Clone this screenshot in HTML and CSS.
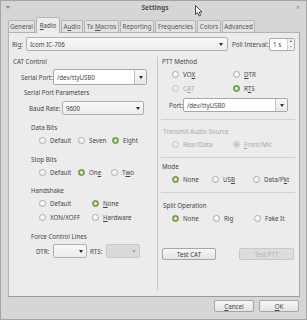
FILE: index.html
```html
<!DOCTYPE html>
<html lang="en">
<head>
    <meta charset="UTF-8">
    <meta name="viewport" content="width=device-width, initial-scale=1.0">
    <title>Settings</title>
    <link rel="stylesheet" href="styles.css">
</head>
<body>
    <div class="window">
        <div class="titlebar">
            <span class="menu-arrow"></span>
            <span class="title">Settings</span>
            <span class="close">×</span>
        </div>
        <svg class="cursor" width="8" height="12" viewBox="0 0 8 12">
            <path d="M0.5 0.5 L0.5 9.5 L2.6 7.6 L4.1 11 L5.6 10.3 L4.2 7 L7 7 Z" fill="#fff" stroke="#222" stroke-width="0.8" stroke-linejoin="round"/>
        </svg>

        <div class="tabs">
            <div class="tab tab-general">General</div>
            <div class="tab tab-radio active"><u>R</u>adio</div>
            <div class="tab tab-audio">A<u>u</u>dio</div>
            <div class="tab tab-tx">Tx <u>M</u>acros</div>
            <div class="tab tab-reporting">Reporting</div>
            <div class="tab tab-freq">Frequencies</div>
            <div class="tab tab-colors">Colors</div>
            <div class="tab tab-advanced">Advanced</div>
        </div>

        <div class="panel">
            <div class="rig-row">
                <span class="rig-label">Ri<u>g</u>:</span>
                <div class="combo rig-combo"><span class="value">Icom IC-706</span><i class="arrow"></i></div>
                <span class="poll-label">Poll Interval:</span>
                <div class="spin">
                    <span class="value">1 s</span>
                    <span class="spin-btns"><i class="up"></i><i class="down"></i></span>
                </div>
            </div>

            <div class="columns">
                <div class="col-left">
                    <div class="heading cat-heading">CAT Control</div>
                    <div class="field-row serial-row">
                        <span class="serial-label">Serial Port:</span>
                        <div class="combo editable serial-combo">
                            <span class="value">/dev/ttyUSB0</span>
                            <span class="drop"><i class="arrow"></i></span>
                        </div>
                    </div>

                    <div class="heading params-heading">Serial Port Parameters</div>
                    <div class="field-row baud-row">
                        <span class="baud-label">Baud Rate:</span>
                        <div class="combo baud-combo"><span class="value">9600</span><i class="arrow"></i></div>
                    </div>

                    <div class="heading sub-heading data-heading">Data Bits</div>
                    <div class="radio-row data-bits">
                        <label class="radio"><i></i>Default</label>
                        <label class="radio"><i></i>Seven</label>
                        <label class="radio checked"><i></i>Eight</label>
                    </div>

                    <div class="heading sub-heading stop-heading">Stop Bits</div>
                    <div class="radio-row stop-bits">
                        <label class="radio"><i></i>Default</label>
                        <label class="radio checked"><i></i>On<u>e</u></label>
                        <label class="radio"><i></i>T<u>w</u>o</label>
                    </div>

                    <div class="heading sub-heading hand-heading">Handshake</div>
                    <div class="radio-row handshake">
                        <label class="radio"><i></i>Default</label>
                        <label class="radio checked"><i></i><u>N</u>one</label>
                    </div>
                    <div class="radio-row handshake second">
                        <label class="radio"><i></i>XON/XOFF</label>
                        <label class="radio"><i></i><u>H</u>ardware</label>
                    </div>

                    <div class="heading sub-heading force-heading">Force Control Lines</div>
                    <div class="field-row lines-row">
                        <span class="dtr-label">DTR:</span>
                        <div class="combo small-combo"><span class="value"></span><i class="arrow"></i></div>
                        <span class="rts-label">RTS:</span>
                        <div class="combo small-combo disabled"><span class="value"></span><i class="arrow"></i></div>
                    </div>
                </div>

                <div class="col-right">
                    <div class="heading ptt-heading">PTT Method</div>
                    <div class="radio-row ptt first">
                        <label class="radio"><i></i>VO<u>X</u></label>
                        <label class="radio"><i></i><u>D</u>TR</label>
                    </div>
                    <div class="radio-row ptt second">
                        <label class="radio disabled"><i></i>C<u>A</u>T</label>
                        <label class="radio checked"><i></i>R<u>T</u>S</label>
                    </div>
                    <div class="field-row port-row">
                        <span class="port-label">Port:</span>
                        <div class="combo editable port-combo">
                            <span class="value">/dev/ttyUSB0</span>
                            <span class="drop"><i class="arrow"></i></span>
                        </div>
                    </div>

                    <div class="separator sep-audio"></div>
                    <div class="heading disabled audio-heading">Transmit Audio Source</div>
                    <div class="radio-row ptt audio">
                        <label class="radio disabled"><i></i>Rear/Data</label>
                        <label class="radio disabled checked"><i></i><u>F</u>ront/Mic</label>
                    </div>

                    <div class="separator sep-mode"></div>
                    <div class="heading mode-heading">Mode</div>
                    <div class="radio-row mode">
                        <label class="radio checked"><i></i>None</label>
                        <label class="radio"><i></i>US<u>B</u></label>
                        <label class="radio"><i></i>Data/P<u>k</u>t</label>
                    </div>

                    <div class="separator sep-split"></div>
                    <div class="heading split-heading">Split Operation</div>
                    <div class="radio-row split">
                        <label class="radio checked"><i></i>None</label>
                        <label class="radio"><i></i>Rig</label>
                        <label class="radio"><i></i>Fake It</label>
                    </div>

                    <div class="test-row">
                        <button class="test-cat">Test CAT</button>
                        <button class="test-ptt" disabled>Test PTT</button>
                    </div>
                </div>
            </div>
        </div>

        <div class="footer">
            <button><u>C</u>ancel</button>
            <button><u>O</u>K</button>
        </div>
    </div>
</body>
</html>
```

FILE: styles.css
```css
* {
    box-sizing: border-box;
}
body {
    margin: 0;
    background: #d6d6d6;
    font-family: "Noto Sans", "DejaVu Sans", sans-serif;
    font-size: 6.2px;
    color: #454545;
}
u {
    text-decoration-thickness: 0.5px;
    text-underline-offset: 1px;
}
.window {
    position: relative;
    width: 307px;
    height: 320px;
    border: 1px solid #a4a4a4;
    background: #d6d6d6;
}

/* title bar */
.titlebar {
    display: flex;
    justify-content: space-between;
    align-items: flex-start;
    height: 17px;
    line-height: 13px;
    padding: 0 6px 0 5px;
}
.menu-arrow {
    width: 0;
    height: 0;
    margin-top: 5px;
    border-left: 2px solid transparent;
    border-right: 2px solid transparent;
    border-top: 3px solid #8a8a8a;
}
.title {
    font-weight: bold;
    font-size: 6.6px;
    color: #4e4e4e;
    margin-left: 4px;
}
.close {
    color: #8a8a8a;
    font-size: 7px;
}
.cursor {
    position: absolute;
    left: 194px;
    top: 4px;
}

/* tabs */
.tabs {
    display: flex;
    align-items: flex-end;
    gap: 1px;
    height: 14px;
    margin-left: 7px;
}
.tab {
    position: relative;
    height: 12px;
    line-height: 11px;
    text-align: center;
    background: #e2e2e2;
    border: 1px solid #b6b6b6;
    border-bottom: none;
    border-radius: 2px 2px 0 0;
    color: #555;
}
.tab.active {
    height: 16px;
    line-height: 15px;
    margin-bottom: -1px;
    background: #ececec;
    color: #454545;
    z-index: 1;
}
.tab-general { width: 27px; }
.tab-radio { width: 24px; }
.tab-audio { width: 22px; }
.tab-tx { width: 35px; }
.tab-reporting { width: 34px; }
.tab-freq { width: 41px; }
.tab-colors { width: 24px; }
.tab-advanced { width: 33px; }

/* main panel */
.panel {
    width: 292px;
    height: 265px;
    margin-left: 7px;
    background: #ececec;
    border: 1px solid #b3b3b3;
    border-bottom-color: #9c9c9c;
    border-right-color: #a8a8a8;
}
.rig-row {
    display: flex;
    align-items: center;
    height: 14px;
    margin-top: 4px;
    padding-left: 3px;
}
.rig-label { width: 14px; }
.poll-label {
    width: 37px;
    margin-left: 4px;
}

/* combo boxes */
.combo {
    display: flex;
    align-items: center;
    height: 14px;
    padding: 0 3px;
    border: 1px solid #b0b0b0;
    border-radius: 2px;
    background: linear-gradient(#f8f8f8, #ededed);
}
.combo .value {
    flex: 1;
    white-space: nowrap;
}
.arrow {
    width: 0;
    height: 0;
    border-left: 2px solid transparent;
    border-right: 2px solid transparent;
    border-top: 3px solid #2e2e2e;
}
.rig-combo .arrow {
    margin-right: 1px;
}
.combo.editable {
    padding: 0 0 0 3px;
    background: #fff;
    border-color: #a8a8a8;
}
.drop {
    display: flex;
    align-items: center;
    justify-content: center;
    width: 12px;
    height: 100%;
    border-left: 1px solid #c2c2c2;
    background: linear-gradient(#f8f8f8, #e8e8e8);
}
.combo.disabled {
    background: #dadada;
    border-color: #c8c8c8;
}
.combo.disabled .arrow {
    border-top-color: #a8a8a8;
}
.rig-combo { width: 202px; }
.serial-combo { width: 94px; height: 16px; }
.baud-combo { width: 82px; }
.port-combo { width: 105px; }
.small-combo { width: 34px; }

/* spin box */
.spin {
    display: flex;
    width: 26px;
    height: 13px;
    border: 1px solid #aaa;
    border-radius: 2px;
    background: #fff;
}
.spin .value {
    flex: 1;
    line-height: 11px;
    padding-left: 3px;
}
.spin-btns {
    display: flex;
    flex-direction: column;
    justify-content: space-around;
    align-items: center;
    width: 7px;
    border-left: 1px solid #d0d0d0;
    background: #f2f2f2;
}
.spin-btns i {
    width: 0;
    height: 0;
    border-left: 1.5px solid transparent;
    border-right: 1.5px solid transparent;
}
.spin-btns .up { border-bottom: 2px solid #555; }
.spin-btns .down { border-top: 2px solid #b0b0b0; }

/* two columns */
.columns {
    display: flex;
    height: 233px;
    margin-top: 6px;
}
.col-left {
    width: 149px;
    border-right: 1px solid #c6c6c6;
}
.col-right {
    flex: 1;
}
.heading {
    height: 12px;
    line-height: 12px;
    white-space: nowrap;
}
.heading.disabled {
    color: #a8a8a8;
}
.field-row {
    display: flex;
    align-items: center;
}

/* left column */
.cat-heading {
    height: 10px;
    line-height: 10px;
    padding-left: 4px;
}
.serial-row {
    margin-top: 2px;
    padding-left: 12px;
}
.serial-label { width: 32px; }
.params-heading {
    margin-top: 2px;
    padding-left: 15px;
}
.baud-row {
    margin-top: 2px;
    padding-left: 20px;
}
.baud-label { width: 33px; }
.sub-heading { padding-left: 22px; }
.data-heading { margin-top: 7px; }
.stop-heading { margin-top: 8px; }
.hand-heading { margin-top: 7px; }
.force-heading { margin-top: 8px; }
.lines-row {
    margin-top: 1px;
    padding-left: 27px;
}
.dtr-label { width: 17px; }
.rts-label {
    width: 16px;
    margin-left: 3px;
}

/* radio buttons */
.radio-row {
    display: grid;
    align-items: center;
    height: 12px;
    padding-left: 30px;
}
.radio {
    display: flex;
    align-items: center;
    white-space: nowrap;
}
.radio i {
    width: 7px;
    height: 7px;
    margin-right: 4px;
    border: 1px solid #a9a9a9;
    border-radius: 50%;
    background: linear-gradient(#fff, #f0f0f0);
}
.radio.checked i {
    border-color: #5d8a35;
    background: radial-gradient(circle, #eef5e4 0 1.1px, #86b356 1.6px);
}
.radio.disabled {
    color: #a8a8a8;
}
.radio.disabled i {
    border-color: #c6c6c6;
    background: #ebebeb;
}
.radio.disabled.checked i {
    border-color: #c0c0c0;
    background: radial-gradient(circle, #b4b4b4 0 1.2px, #e8e8e8 1.6px);
}
.data-bits { grid-template-columns: 39px 34px auto; }
.stop-bits { grid-template-columns: 39px 33px auto; }
.handshake { grid-template-columns: 53px auto; }
.handshake.second { margin-top: 2px; }

/* right column */
.ptt-heading {
    height: 10px;
    line-height: 10px;
    padding-left: 4px;
}
.col-right .radio-row { padding-left: 14px; }
.ptt { grid-template-columns: 61px auto; }
.ptt.first { margin-top: 1px; }
.ptt.second { margin-top: 2px; }
.port-row {
    margin-top: 4px;
    padding-left: 11px;
}
.port-label { width: 14px; }
.separator {
    height: 1px;
    margin: 0 4px 0 3px;
    background: #d0d0d0;
}
.sep-audio { margin-top: 7px; }
.audio-heading {
    margin-top: 6px;
    padding-left: 5px;
}
.sep-mode { margin-top: 7px; }
.mode-heading {
    margin-top: 3px;
    padding-left: 4px;
}
.mode { grid-template-columns: 40px 41px auto; }
.sep-split { margin-top: 7px; }
.split-heading {
    margin-top: 7px;
    padding-left: 5px;
}
.split { grid-template-columns: 41px 41px auto; }

/* buttons */
button {
    height: 12px;
    padding: 0;
    font: inherit;
    color: #454545;
    border: 1px solid #a6a6a6;
    border-radius: 2px;
    background: linear-gradient(#f7f7f7, #e3e3e3);
}
button:disabled {
    color: #b0b0b0;
    border-color: #c8c8c8;
    background: #dcdcdc;
}
.test-row {
    display: flex;
    margin-top: 24px;
    padding-left: 4px;
}
.test-cat { width: 54px; }
.test-ptt {
    width: 55px;
    margin-left: 23px;
}
.footer {
    display: flex;
    justify-content: flex-end;
    gap: 5px;
    padding: 3px 7px 0 0;
}
.footer button { width: 40px; }
```
